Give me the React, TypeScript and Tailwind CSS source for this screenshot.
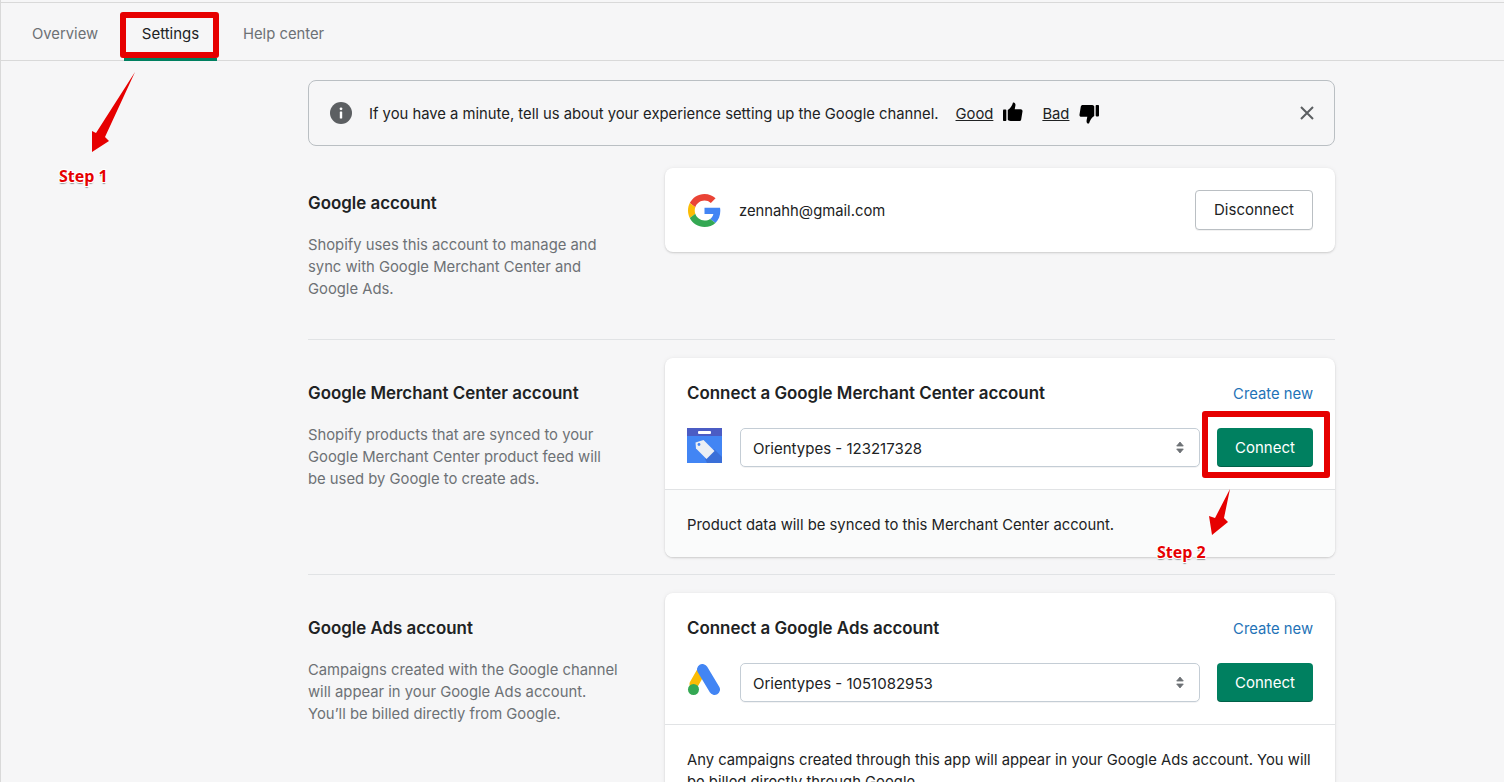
const font = "font-['Inter','Noto_Sans',sans-serif]";

function GoogleLogo() {
  return (
    <svg width="33" height="33" viewBox="0 0 48 48" className="shrink-0">
      <path fill="#EA4335" d="M24 9.500c3.500 0 6.700 1.200 9.200 3.600l6.900-6.900C35.900 2.400 30.500 0 24 0 14.600 0 6.500 5.400 2.600 13.200l8 6.200C12.500 13.600 17.800 9.500 24 9.500z" />
      <path fill="#4285F4" d="M47 24.500c0-1.600-.1-3.100-.4-4.500H24v9h12.900c-.6 3-2.200 5.500-4.700 7.200l7.700 6C44.400 38 47 31.800 47 24.500z" />
      <path fill="#FBBC05" d="M10.600 28.600c-.5-1.400-.8-3-.8-4.600s.3-3.200.8-4.600l-8-6.200C.9 16.500 0 20.100 0 24s.9 7.500 2.600 10.800l8-6.200z" />
      <path fill="#34A853" d="M24 48c6.500 0 11.900-2.100 15.900-5.800l-7.700-6c-2.200 1.400-4.900 2.300-8.200 2.300-6.200 0-11.500-4.200-13.400-9.800l-8 6.200C6.500 42.600 14.600 48 24 48z" />
    </svg>
  );
}

function MerchantLogo() {
  return (
    <svg width="35" height="35" viewBox="0 0 35 35" className="shrink-0">
      <rect width="35" height="35" fill="#4285F4" />
      <path d="M27 21l8 8v6H20l-2-4z" fill="#3A6FD8" />
      <rect width="35" height="8" fill="#4B5CC4" />
      <rect x="11" y="3" width="13" height="3" rx="1" fill="#fff" />
      <path d="M8.500 14.500l8-2.500 11 11-8 8L9 20.500z" fill="#ECEFF4" />
      <circle cx="12" cy="16.500" r="1.400" fill="#4285F4" />
    </svg>
  );
}

function AdsLogo() {
  return (
    <svg width="34" height="32" viewBox="0 0 34 32" className="shrink-0">
      <path d="M15 6L7 20" stroke="#FBBC04" strokeWidth="9" strokeLinecap="round" fill="none" />
      <path d="M15.500 5.500L27.500 25.500" stroke="#4285F4" strokeWidth="11" strokeLinecap="round" fill="none" />
      <circle cx="6.500" cy="25.500" r="5.500" fill="#34A853" />
    </svg>
  );
}

function ThumbUp({ flip }: { flip?: boolean }) {
  return (
    <svg width="20" height="20" viewBox="0 0 21 21" className={flip ? "rotate-180" : ""}>
      <rect x="0" y="8" width="3.500" height="12" rx="0.800" fill="#000" />
      <path d="M5 8.500c2.500-1.500 4.500-4.500 5.500-8 1.800-.4 3 1.200 2.500 3.500L12.300 7.500h6.200c1.300 0 2.200 1.100 2 2.300l-1.400 8.500c-.2 1-1 1.700-2 1.700H8c-1.500 0-3-.6-3-1.500z" fill="#000" />
    </svg>
  );
}

function SelectBox({ value }: { value: string }) {
  return (
    <div className="flex-1 h-[39px] flex items-center justify-between pl-3 pr-[15px] bg-white border border-[#c4cdd5] rounded-[5px] shadow-[0_1px_0_rgba(22,29,37,0.05)]">
      <span className="pt-[3px] text-[15px] text-[#202223]">{value}</span>
      <svg width="8" height="13" viewBox="0 0 8 13" fill="#6d7175" stroke="#6d7175" strokeWidth="0.800" strokeLinejoin="round">
        <path d="M4 1L7.300 5H.7z" />
        <path d="M4 12L.7 8h6.600z" />
      </svg>
    </div>
  );
}

function ConnectButton() {
  return (
    <button className="w-[96px] h-[39px] pt-[2px] shrink-0 rounded-[4px] bg-[#008060] text-[15px] text-white shadow-[inset_0_-1px_0_rgba(0,0,0,0.25)]">
      Connect
    </button>
  );
}

function SectionText({ title, children }: { title: string; children: React.ReactNode }) {
  return (
    <div className="w-[357px] shrink-0 pt-[24px]">
      <h2 className="text-[16.900px] leading-[22px] font-semibold text-[#202223]">{title}</h2>
      <p className="mt-[20px] leading-[22px] text-[#6d7175]">{children}</p>
    </div>
  );
}

function ConnectCard({
  title,
  logo,
  value,
  footer,
  footerBg,
}: {
  title: string;
  logo: React.ReactNode;
  value: string;
  footer: React.ReactNode;
  footerBg?: boolean;
}) {
  return (
    <div className="flex-1 bg-white rounded-[8px] shadow-[0_0_5px_rgba(23,24,24,0.05),0_1px_2px_rgba(0,0,0,0.15)] overflow-hidden">
      <div className="px-[22px] pt-[24px] pb-[22px] border-b border-[#e1e3e5]">
        <div className="flex items-center justify-between h-[22px] pt-[2px]">
          <h3 className="text-[16.900px] font-semibold text-[#202223]">{title}</h3>
          <a className="text-[#1f73b7]">Create new</a>
        </div>
        <div className="flex items-center mt-[24px]">
          <div className="w-[53px] shrink-0 -mt-[5px]">{logo}</div>
          <div className="flex-1 flex gap-[17px] items-center">
            <SelectBox value={value} />
            <ConnectButton />
          </div>
        </div>
      </div>
      <div className={`px-[22px] pt-[24px] pb-[21px] leading-[22px] ${footerBg ? "bg-[#fafbfb]" : ""}`}>{footer}</div>
    </div>
  );
}

export default function App() {
  const stepClass =
    "absolute text-[16px] leading-[20px] font-bold font-['Open_Sans',sans-serif] text-[#e60000] [text-shadow:1px_1px_0_#fff,-1px_-1px_0_#fff,1px_-1px_0_#fff,-1px_1px_0_#fff,0_2px_1px_#999]";

  return (
    <div className={`relative h-[782px] overflow-hidden bg-[#f6f6f7] text-[14.800px] text-[#202223] border-l border-[#d9d9d9] ${font}`}>
      <div className="mt-[2px] h-[59px] border-t border-b border-[#d9d9d9] flex items-stretch pl-[8px]">
        <span className="w-[110px] pl-[23px] pt-[5px] flex items-center text-[#6d7175]">Overview</span>
        <div className="relative flex items-center w-[93px] justify-center pt-[5px] ml-[5px] text-[15px] text-[#202223]">
          Settings
          <div className="absolute left-0 right-0 -bottom-px h-[3px] bg-[#008060]" />
        </div>
        <span className="ml-[26px] pt-[5px] flex items-center text-[#6d7175]">Help center</span>
      </div>

      <main className="ml-[307px] w-[1027px] pt-[19px]">
        <div className="h-[66px] flex items-center border border-[#babfc3] rounded-[8px] pl-[21px] pr-[20px]">
          <svg width="22" height="22" viewBox="0 0 22 22" className="shrink-0">
            <circle cx="11" cy="11" r="11" fill="#5c5f62" />
            <rect x="9.800" y="9.500" width="2.400" height="7" rx="0.500" fill="#fff" />
            <circle cx="11" cy="6.800" r="1.400" fill="#fff" />
          </svg>
          <span className="ml-[17px] pt-[2px]">If you have a minute, tell us about your experience setting up the Google channel.</span>
          <a className="ml-[17px] pt-[2px] underline">Good</a>
          <span className="ml-[10px] -mt-[2px]"><ThumbUp /></span>
          <a className="ml-[19px] pt-[2px] underline">Bad</a>
          <span className="ml-[10px] mt-[2px]"><ThumbUp flip /></span>
          <svg width="14" height="14" viewBox="0 0 14 14" className="ml-auto" stroke="#5c5f62" strokeWidth="2">
            <path d="M1 1l12 12M13 1L1 13" />
          </svg>
        </div>

        <section className="flex items-start pt-[22px] h-[194px] border-b border-[#e1e3e5]">
          <SectionText title="Google account">
            Shopify uses this account to manage and
            <br />
            sync with Google Merchant Center and
            <br />
            Google Ads.
          </SectionText>
          <div className="flex-1 h-[84px] bg-white rounded-[8px] shadow-[0_0_5px_rgba(23,24,24,0.05),0_1px_2px_rgba(0,0,0,0.15)] flex items-center pl-[23px] pr-[22px]">
            <GoogleLogo />
            <span className="ml-[18px] pt-[2px]">zennahh@gmail.com</span>
            <button className="ml-auto w-[118px] h-[40px] text-[15px] bg-white border border-[#babfc3] rounded-[4px] shadow-[0_1px_0_rgba(0,0,0,0.05)]">
              Disconnect
            </button>
          </div>
        </section>

        <section className="flex items-start pt-[18px] h-[235px] border-b border-[#e1e3e5]">
          <SectionText title="Google Merchant Center account">
            Shopify products that are synced to your
            <br />
            Google Merchant Center product feed will
            <br />
            be used by Google to create ads.
          </SectionText>
          <ConnectCard
            title="Connect a Google Merchant Center account"
            logo={<MerchantLogo />}
            value="Orientypes - 123217328"
            footerBg
            footer="Product data will be synced to this Merchant Center account."
          />
        </section>

        <section className="flex items-start pt-[18px]">
          <SectionText title="Google Ads account">
            Campaigns created with the Google channel
            <br />
            will appear in your Google Ads account.
            <br />
            You’ll be billed directly from Google.
          </SectionText>
          <ConnectCard
            title="Connect a Google Ads account"
            logo={<AdsLogo />}
            value="Orientypes - 1051082953"
            footer="Any campaigns created through this app will appear in your Google Ads account. You will be billed directly through Google."
          />
        </section>
      </main>

      {/* red annotations on top of the screenshot */}
      <div className="absolute left-[119px] top-[12px] w-[99px] h-[46px] border-[6px] border-[#e60000] rounded-[3px]" />
      <div className="absolute left-[1201px] top-[411px] w-[128px] h-[67px] border-[6px] border-[#e60000] rounded-[3px]" />
      <svg width="60" height="90" viewBox="0 0 60 90" className="absolute left-[84px] top-[68px]">
        <path d="M50 4L11 65l-4-2 0 21 17-11-4-4z" fill="#e60000" />
      </svg>
      <svg width="30" height="54" viewBox="0 0 30 54" className="absolute left-[1204px] top-[486px]">
        <path d="M25 3L10 32l-6-2 3 19 16-13-4-4z" fill="#e60000" />
      </svg>
      <span className={`${stepClass} left-[58px] top-[166px]`}>Step 1</span>
      <span className={`${stepClass} left-[1156px] top-[542px]`}>Step 2</span>
    </div>
  );
}
